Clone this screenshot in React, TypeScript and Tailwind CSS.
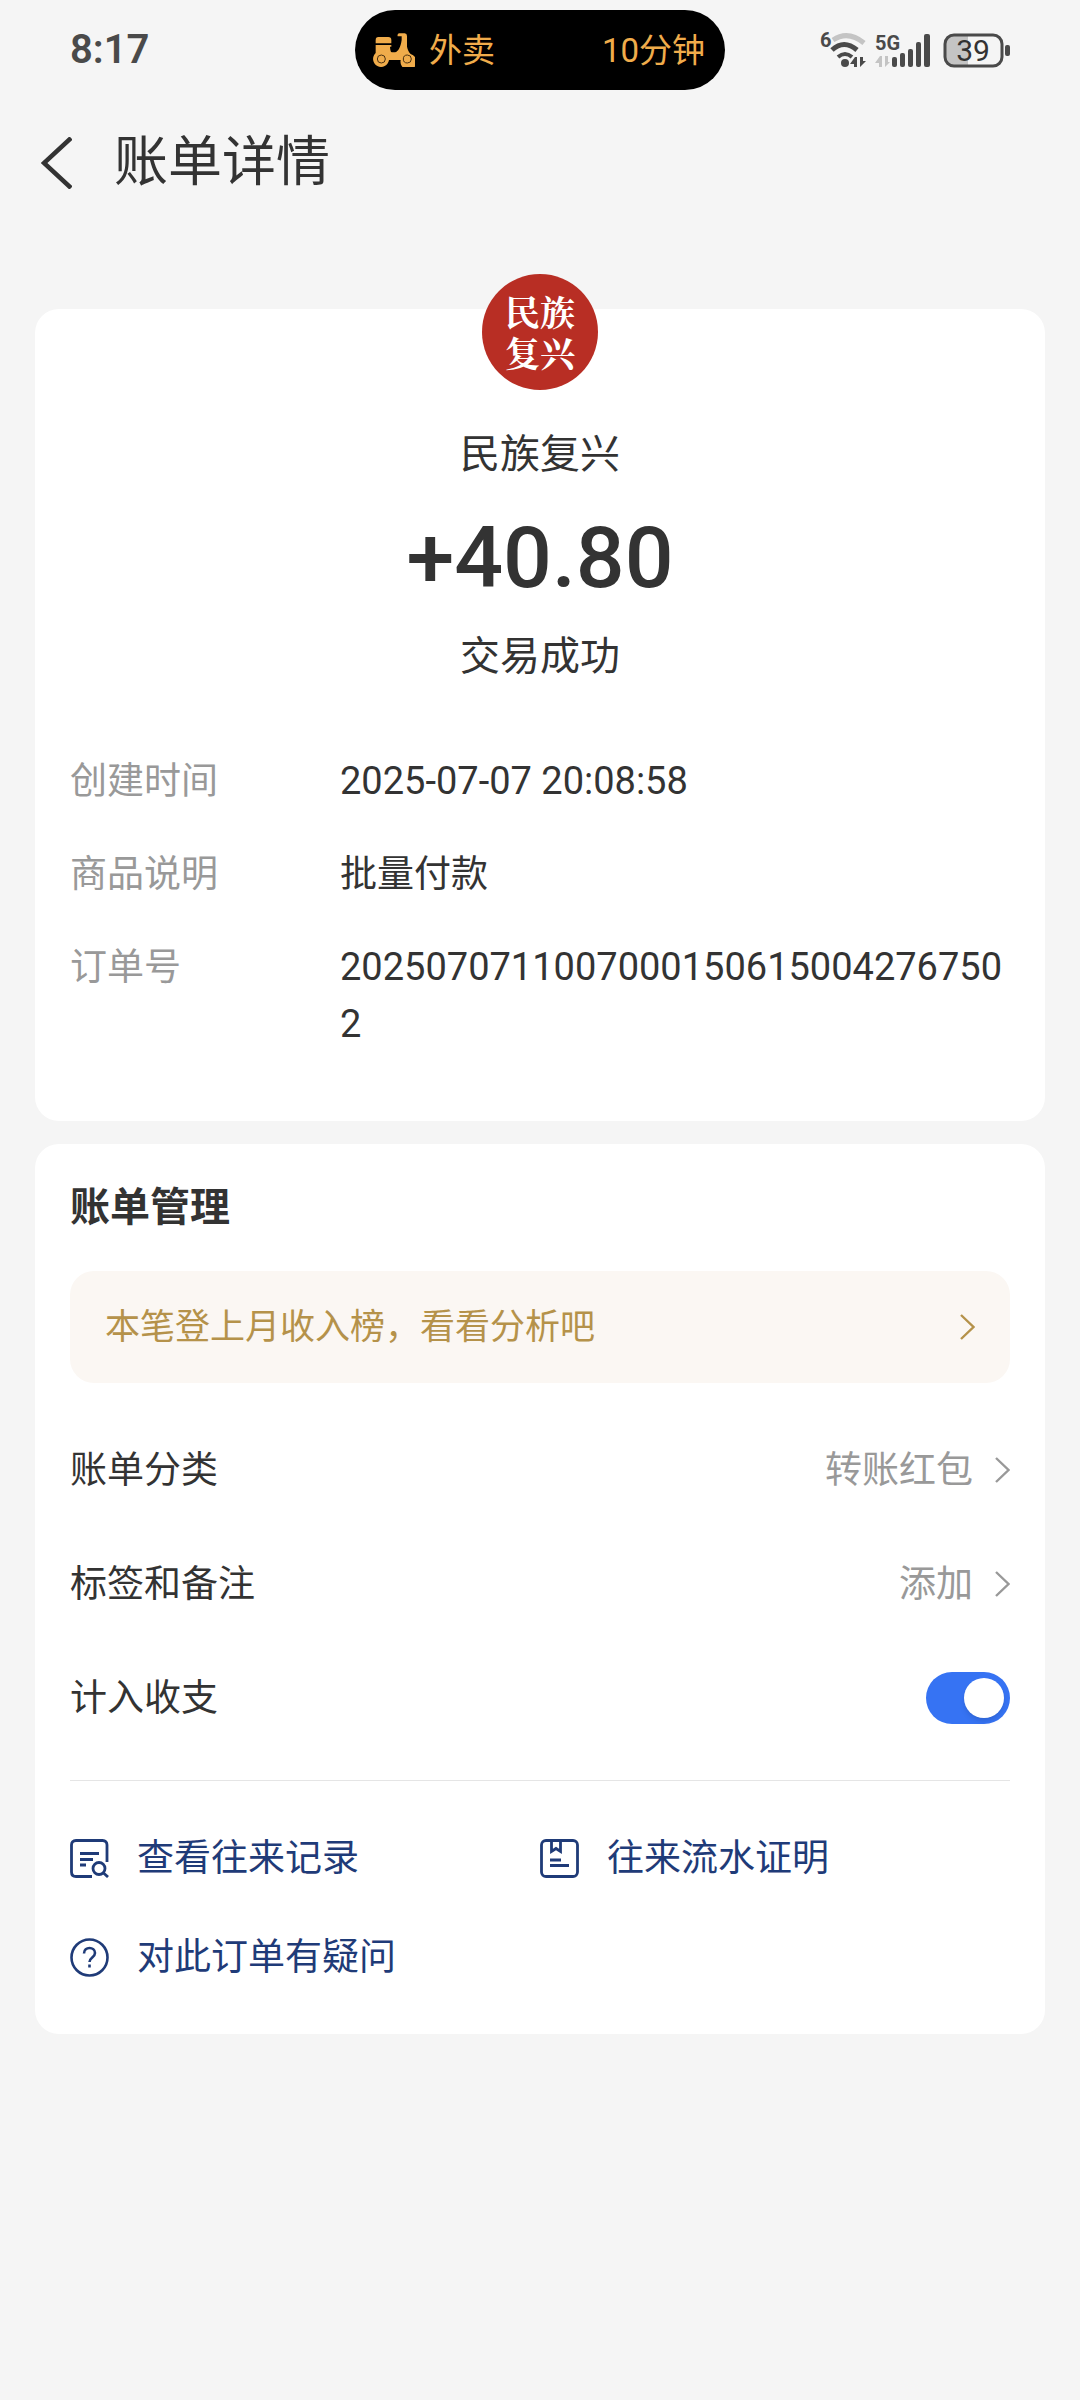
import React, { useState } from 'react'

type Detail = {
  label: string
  value: string
}

type IconProps = {
  className?: string
}

const details: Detail[] = [
  { label: '创建时间', value: '2025-07-07 20:08:58' },
  { label: '商品说明', value: '批量付款' },
  { label: '订单号', value: '20250707110070001506150042767502' },
]

const ScooterIcon = () => (
  <svg width="42" height="34" viewBox="0 0 126 102" aria-hidden="true">
    <g fill="#f0ac4b">
      <path d="M16 12h30q9 0 9 9v10H8V21q0-9 8-9z" />
      <path d="M8 36h47v5h-4c1 12 2 17 7 17h8c10-2 17-17 20-37V10H74q-2-8 5-9h16q7 1 7 8v32c2 10 6 17 11 22a24 24 0 1 1-30 18H48A24 24 0 1 1 8 60z" />
    </g>
    <g fill="none" stroke="#4a3010" strokeWidth="3">
      <circle cx="25" cy="78" r="12" />
      <circle cx="103" cy="78" r="12" />
    </g>
  </svg>
)

const SystemIcons = () => (
  <svg
    width="230"
    height="80"
    viewBox="0 0 230 80"
    fill="none"
    role="img"
    aria-label="WiFi 5G 39%"
    fontFamily="Roboto, sans-serif"
  >
    {/* WiFi */}
    <text x="20" y="37" fontSize="20" fontWeight="700" fill="#4a4a4a">
      6
    </text>
    <path d="M33 30Q48 20 64 33" stroke="#c4c4c4" strokeWidth="5" />
    <path d="M32 40Q44 29 57 40" stroke="#4a4a4a" strokeWidth="5" />
    <path d="M38 47Q45 41 52 47" stroke="#4a4a4a" strokeWidth="4" />
    <circle cx="45" cy="53" r="4" fill="#4a4a4a" />
    <path d="M57 47v10h-3v-3h-4l5-7zM60 47v10l6-6h-3v-4z" fill="#4a4a4a" />
    {/* Mobile signal */}
    <text x="75" y="40" fontSize="20" fontWeight="700" fill="#4a4a4a">
      5G
    </text>
    <path d="M82 46v11h-3v-4h-4l5-7zM85 46v11l5-5h-2v-6z" fill="#c4c4c4" />
    <g fill="#4a4a4a">
      <rect x="92" y="47" width="5" height="10" rx="2" />
      <rect x="100" y="43" width="5" height="14" rx="2" />
      <rect x="108" y="39" width="5" height="18" rx="2" />
      <rect x="116" y="32" width="5" height="25" rx="2" />
      <rect x="124" y="24" width="6" height="33" rx="2" />
    </g>
    {/* Battery */}
    <path d="M168 26h-15q-8 0-8 8v13q0 8 8 8h15z" fill="#c4c4c4" />
    <rect x="145" y="25" width="57" height="31" rx="9" stroke="#4a4a4a" strokeWidth="3" />
    <rect x="205" y="35" width="5" height="11" rx="2" fill="#4a4a4a" />
    <text x="173" y="51" fontSize="30" fontWeight="400" textAnchor="middle" fill="#333333">
      39
    </text>
  </svg>
)

const Chevron = ({ className }: IconProps) => (
  <svg
    className={className}
    width="15"
    height="26"
    viewBox="0 0 15 26"
    fill="none"
    stroke="currentColor"
    strokeWidth="2.4"
    aria-hidden="true"
  >
    <path d="M1 1l12.5 12L1 25" />
  </svg>
)

const RecordIcon = () => (
  <svg width="39" height="39" viewBox="0 0 39 39" fill="none" stroke="currentColor" strokeWidth="2.8" aria-hidden="true">
    <path d="M37 23V6q0-4.500-4.500-4.500H6Q1.500 1.500 1.500 6v27q0 4.500 4.500 4.500h16" />
    <path d="M10 14.500h19M10 20.500h13M10 26h6" />
    <circle cx="29" cy="29.500" r="6" />
    <path d="M33.500 34l4.500 4" />
  </svg>
)

const CertificateIcon = () => (
  <svg width="39" height="39" viewBox="0 0 39 39" fill="none" stroke="currentColor" strokeWidth="2.8" aria-hidden="true">
    <rect x="1.5" y="1.5" width="36" height="36" rx="4.5" />
    <path d="M11.500 2v10.500l4.500-3 4.500 3V2" />
    <path d="M10 21h11M10 26.500h19" />
  </svg>
)

const QuestionIcon = () => (
  <svg width="39" height="39" viewBox="0 0 39 39" fill="none" stroke="currentColor" strokeWidth="2.6" aria-hidden="true">
    <circle cx="19.5" cy="19.5" r="18" />
    <path d="M14 15.500c0-7.500 11-7 11-.5 0 4.500-5.500 4.500-5.500 9" />
    <path d="M19.500 26.500v3" />
  </svg>
)

const links = [
  { text: '查看往来记录', icon: <RecordIcon /> },
  { text: '往来流水证明', icon: <CertificateIcon /> },
  { text: '对此订单有疑问', icon: <QuestionIcon /> },
]

const StatusBar = () => (
  <div className="grid grid-cols-[1fr_370px_1fr] items-center pt-[10px]">
    <span className="pl-[70px] text-[40px] leading-[60px] font-semibold text-[#4a4a4a]">
      8:17
    </span>
    <div className="flex h-[80px] items-center justify-between rounded-full bg-black pl-[18px] pr-[20px] text-[33px] text-[#f0ac4b]">
      <span className="flex items-center gap-[14px]">
        <ScooterIcon />
        外卖
      </span>
      <span>10分钟</span>
    </div>
    <div className="flex justify-end pr-[50px]">
      <SystemIcons />
    </div>
  </div>
)

const SettingRow = ({ label, value }: Detail) => (
  <button type="button" className="flex h-[114px] w-full items-center text-left">
    <span className="flex-1">{label}</span>
    <span className="text-[#999999]">{value}</span>
    <Chevron className="ml-[22px] text-[#999999]" />
  </button>
)

const App = () => {
  const [counted, setCounted] = useState(true)

  return (
    <div className="min-h-screen bg-[#f5f5f5] font-[Roboto,'Noto_Sans_CJK_SC',sans-serif] text-[37px] leading-[57px] text-[#333333]">
      <StatusBar />

      <header className="flex items-center gap-[42px] pl-[41px] pt-[37px]">
        <button type="button" aria-label="返回">
          <svg width="31" height="52" viewBox="0 0 31 52" fill="none" stroke="currentColor" strokeWidth="4.5">
            <path d="M30 1L3 26l27 25" />
          </svg>
        </button>
        <h1 className="text-[54px] leading-[72px]">账单详情</h1>
      </header>

      <main className="mt-[110px] flex flex-col gap-[23px] px-[35px]">
        {/* Bill summary */}
        <section className="rounded-[24px] bg-white px-[35px] pb-[68px]">
          <div className="flex flex-col items-center">
            <div className="-mt-[35px] flex size-[116px] items-center justify-center rounded-full bg-[#b82e24]">
              <p className="w-[70px] break-all font-['Noto_Serif_CJK_SC','Noto_Sans_CJK_SC',serif] text-[35px] leading-[41px] font-bold text-white">
                民族复兴
              </p>
            </div>
            <h2 className="mt-[35px] text-[40px] leading-[60px]">民族复兴</h2>
            <p className="mt-[23px] text-[86px] leading-[100px] font-medium">+40.80</p>
            <p className="mt-[19px] text-[40px] leading-[60px]">交易成功</p>
          </div>

          <dl className="mt-[66px] flex flex-col gap-[36px]">
            {details.map((item) => (
              <div key={item.label} className="flex">
                <dt className="w-[270px] shrink-0 text-[#999999]">{item.label}</dt>
                <dd className={`min-w-0 break-all ${/^\d/.test(item.value) ? 'text-[38px]' : ''}`}>
                  {item.value}
                </dd>
              </div>
            ))}
          </dl>
        </section>

        {/* Bill management */}
        <section className="rounded-[24px] bg-white px-[35px] pt-[34px] pb-[48px]">
          <h2 className="text-[40px] leading-[60px] font-bold">账单管理</h2>

          <button
            type="button"
            className="mt-[33px] flex h-[112px] w-full items-center justify-between rounded-[24px] bg-[#fbf7f3] px-[35px] text-[35px] text-[#b5924a]"
          >
            本笔登上月收入榜，看看分析吧
            <Chevron />
          </button>

          <div className="mt-[30px]">
            <SettingRow label="账单分类" value="转账红包" />
            <SettingRow label="标签和备注" value="添加" />
            <div className="flex h-[114px] items-center justify-between">
              <label htmlFor="counted">计入收支</label>
              <input
                id="counted"
                type="checkbox"
                role="switch"
                checked={counted}
                onChange={(e) => setCounted(e.target.checked)}
                className="flex h-[52px] w-[84px] appearance-none items-center rounded-full bg-[#cccccc] px-[6px] before:size-[40px] before:rounded-full before:bg-white before:shadow-md checked:justify-end checked:bg-[#3673f3]"
              />
            </div>
          </div>

          <hr className="mt-[25px] border-[#e5e5e5]" />

          <nav className="mt-[49px] grid grid-cols-2 gap-y-[42px] text-[#1f3b78]">
            {links.map((link) => (
              <a key={link.text} href="#" className="flex items-center gap-[28px]">
                {link.icon}
                {link.text}
              </a>
            ))}
          </nav>
        </section>
      </main>
    </div>
  )
}

export default App
